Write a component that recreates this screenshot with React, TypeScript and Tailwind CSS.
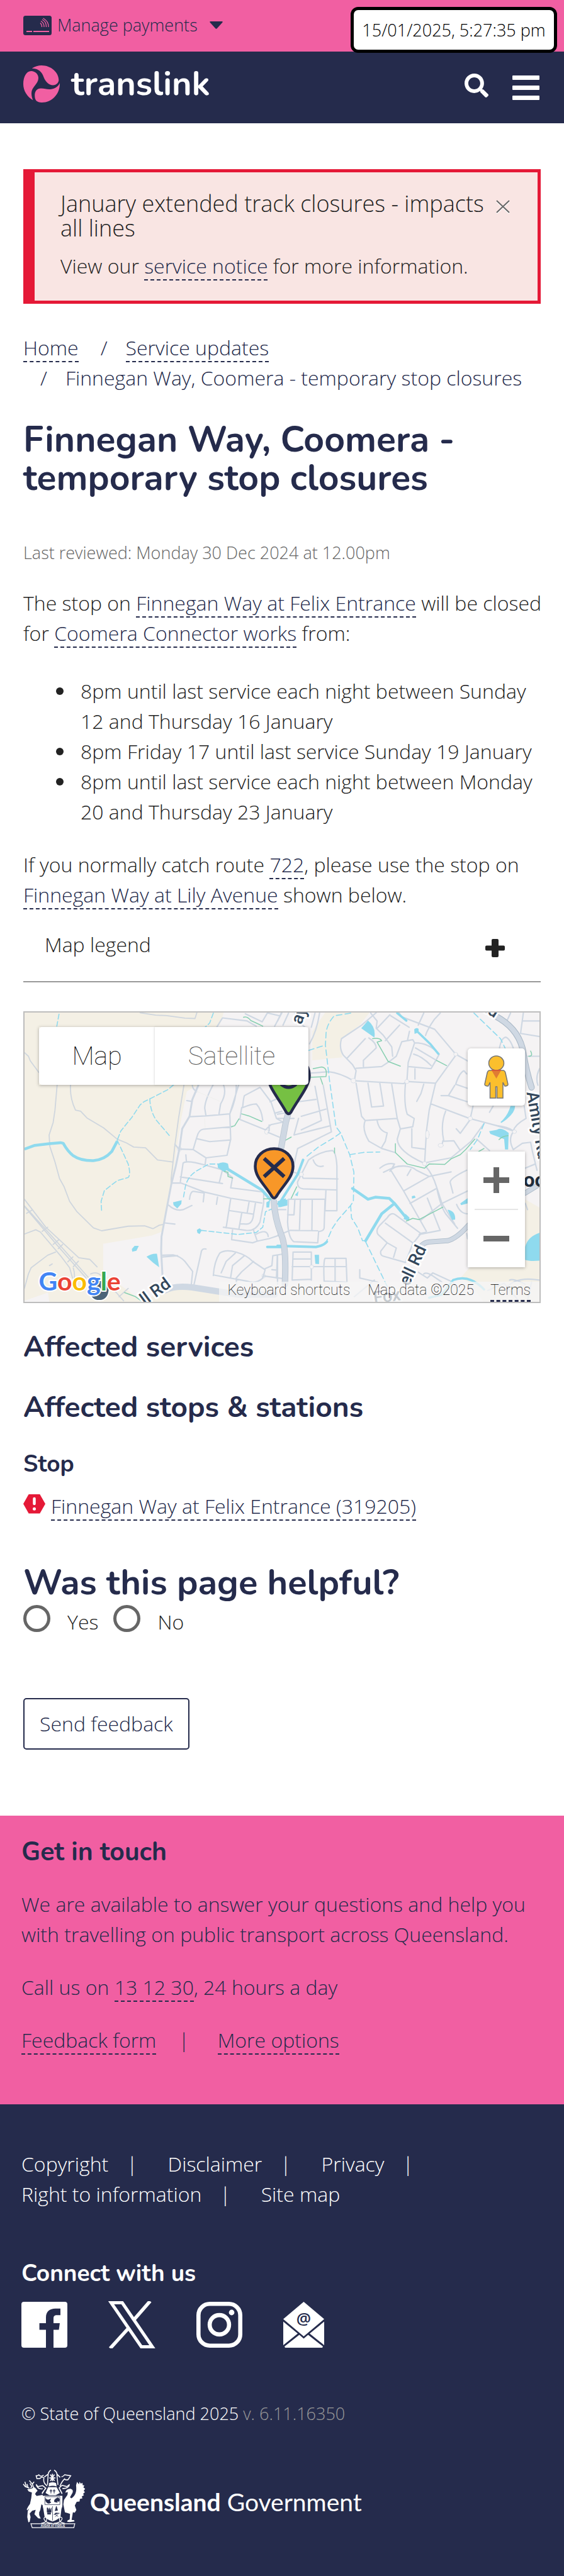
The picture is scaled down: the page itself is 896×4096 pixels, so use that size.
import type { ReactNode } from 'react';
import { FaSearch } from 'react-icons/fa';

const HEADING = "font-['Nunito','Lato',sans-serif] font-bold";

function TextLink({ children, href = '#' }: { children: ReactNode; href?: string }) {
  return (
    <a href={href} className="border-b-2 border-dashed border-[#252b4c] text-[#252b4c]">
      {children}
    </a>
  );
}

function PaymentCardIcon() {
  return (
    <svg width="45" height="31" viewBox="0 0 45 31" aria-hidden="true">
      <rect width="45" height="31" rx="3.5" fill="#252b4c" />
      <path d="M5 25h9M16 25h25" stroke="#f15fa2" strokeWidth="2" />
      <path
        d="M27 11.5q3 3 2.5 6.500M28 8.500q5.500 3.500 5 9.500M30 6q7 4 6.500 12M31.500 4q9 5 8.500 14"
        fill="none"
        stroke="#f15fa2"
        strokeWidth="1.300"
      />
    </svg>
  );
}

function TranslinkMark() {
  return (
    <svg width="59" height="59" viewBox="0 0 59 59" fill="#f15fa2" aria-hidden="true">
      <path d="M13.700 4.800C18 1.500 24 0 29 0 44 0 56 11 56.300 23c0 4-3.300 8.500-9.300 8.500S35.500 26 33 20C31 14 27 5 13.700 4.800z" />
      <path d="M12.500 9C19 9 24 14 24 20c0 10-11 14-11 24 0 5 1 8 2.400 11.300C6 50 0 40 0 29.500 0 18 5 9 12.500 9z" />
      <path d="M18.200 48C18 41 22 36.600 28 36.600c6 0 9 1.800 15 1.400 8-1 13-5 15-10 .5 18-13 31-28.500 31-8.500 0-11.200-4-11.300-11z" />
    </svg>
  );
}

function TopBar() {
  return (
    <div className="relative flex h-[82px] items-start bg-[#f15fa2] px-[37px] pt-[20px]">
      <button type="button" className="flex items-center text-[27px] leading-[40px] text-[#252b4c]">
        <PaymentCardIcon />
        <span className="ml-[9px]">Manage payments</span>
        <svg className="ml-[19px]" width="21" height="12" viewBox="0 0 21 12" aria-hidden="true">
          <path d="M1.500 0h18q2 0 .8 1.800l-8.600 9.400q-1.200 1.200-2.400 0L.7 1.800Q-.5 0 1.500 0z" fill="#252b4c" />
        </svg>
      </button>
      <time className="absolute top-[11px] right-[11px] z-10 flex h-[73px] w-[328px] items-center justify-center rounded-[12px] border-5 border-black bg-white text-[27px] leading-[40px] whitespace-nowrap text-black">
        15/01/2025, 5:27:35 pm
      </time>
    </div>
  );
}

function NavBar() {
  return (
    <header className="flex h-[114px] items-start justify-between bg-[#252b4c] pt-[22px] pr-[39px] pl-[37px]">
      <a href="#" className="flex items-center gap-[17px] text-white">
        <TranslinkMark />
        <span className="font-['Nunito','Lato',sans-serif] text-[54px] leading-[59px] font-bold">translink</span>
      </a>
      <div className="flex items-start gap-[38px] pt-[13px] text-white">
        <button type="button" aria-label="Search">
          <FaSearch size={38} />
        </button>
        <button type="button" aria-label="Menu" className="flex flex-col gap-[9px] pt-[3px]">
          <span className="h-[7px] w-[43px] rounded-[1px] bg-white" />
          <span className="h-[7px] w-[43px] rounded-[1px] bg-white" />
          <span className="h-[7px] w-[43px] rounded-[1px] bg-white" />
        </button>
      </div>
    </header>
  );
}

function Alert() {
  return (
    <section className="mt-[73px] border-5 border-l-[18px] border-[#e51937] bg-[#f9e5e3] pt-[30px] pr-[44px] pb-[31px] pl-[41px]">
      <div className="flex items-start">
        <h2 className="grow text-[36px] leading-[39px]">January extended track closures - impacts all lines</h2>
        <button type="button" aria-label="Dismiss" className="mt-[14px] shrink-0">
          <svg width="22" height="22" viewBox="0 0 22 22" aria-hidden="true">
            <path d="M1 2.500l20 19M21 2.500l-20 19" stroke="#fff" strokeWidth="2" />
            <path d="M1 1l20 19M21 1l-20 19" stroke="#666" strokeWidth="2" />
          </svg>
        </button>
      </div>
      <p className="mt-[17px]">
        View our <TextLink>service notice</TextLink> for more information.
      </p>
    </section>
  );
}

function Breadcrumb() {
  return (
    <nav aria-label="Breadcrumb" className="mt-[46px] text-[#252b4c]">
      <ol className="flex flex-wrap">
        <li>
          <TextLink>Home</TextLink>
        </li>
        <li className="pl-[35px]">
          <span className="pr-[29px]">/</span>
          <TextLink>Service updates</TextLink>
        </li>
        <li className="pl-[27px]">
          <span className="pr-[29px]">/</span>
          Finnegan Way, Coomera - temporary stop closures
        </li>
      </ol>
    </nav>
  );
}

const ROAD = '#cfd8e3';
const WATER = '#8fdaee';
const PATH_GREEN = '#86cfb0';

function MapCanvas() {
  return (
    <svg
      className="absolute inset-0 h-full w-full [&_path]:[vector-effect:non-scaling-stroke]"
      viewBox="0 0 819 460"
      preserveAspectRatio="xMidYMid slice"
      aria-hidden="true"
    >
      <rect width="819" height="460" fill="#f5f3f4" />
      <g transform="translate(-38.400 -29.400) scale(.2908 .3296)" fill="none" strokeLinejoin="round" strokeLinecap="round">
        <path
          fill="#f4f0e5"
          d="M130 80H1225L1200 150 1180 160 1080 440 1020 470 990 600 940 900 890 1145 830 1165 563 1205 563 1350 700 1430 780 1490H270L262 1440 133 1480z"
        />
        <path fill="#f4f0e5" d="M800 1490L880 1405 1220 1440 1260 1490z" />
        <g stroke="#cfd6de" strokeWidth="1.800">
          <path d="M133 282L155 300 165 322 212 378M312 436L300 560 290 620 268 680 272 735 300 810 325 890 350 930 380 1000 420 1050 510 1128 555 1142 700 1120 790 1118 835 1132 870 1115 890 1112M385 436Q380 500 412 560L440 565 475 598 565 645 640 700 690 718 730 738 795 742 860 800 942 810M1005 436L975 600 955 730 935 890 935 920M765 90L850 102 910 104 1010 116 1065 118 1075 90M133 990L250 1125 330 1190 430 1272 490 1280 530 1316" />
          <path d="M133 1022L300 1185 480 1365 530 1410M138 1030L310 1210 470 1370M145 1058l30-16M230 1145l30-20M290 1208l30-22M318 1228l24-20M370 1292l28-24M400 1315l28-26M270 1310l15-8" />
          <path d="M133 1158L195 1137 220 1148 330 1262 380 1320 396 1370M303 1245L260 1260 170 1320 155 1350 133 1420M400 1322q10 30 5 50M495 1350q50-20 80 40l60 50 40 40M700 1420l-50 40" />
        </g>
        <g stroke={ROAD} strokeWidth="2.200">
          <path d="M1185 158L1215 115 1350 130 1400 155M1340 95L1432 134 1460 92M1465 92L1528 105M1540 90L1500 155" />
          <path d="M1085 436L1050 510 1035 590 995 650 980 745 960 830 935 920 905 1060 882 1170 880 1240 890 1400" strokeWidth="3" />
          <path d="M1020 514L1048 518M1050 436Q1050 460 1075 470M1035 592L1125 588 1255 578 1310 420M1165 436Q1120 510 1118 550L1125 588M1220 436Q1240 480 1205 530L1196 578M1290 436Q1295 500 1255 578L1260 700 1240 778 1125 790 1055 750 1075 690Q1085 655 1110 652L1265 640M1075 698L1145 712 1260 704M980 748L1055 750M955 725L975 745M1125 790L1120 822M1015 776L1018 808M985 905L1000 815Q1020 800 1120 825L1215 848 1198 908M985 882L1215 914M942 912L990 912 1115 955 1260 985 1430 1008M1035 990Q1040 950 1058 952L1115 960 1110 1002M1188 980L1182 1014M1218 850L1270 885 1260 935 1440 955 1440 1008 1420 1100Q1395 1145 1345 1140L1220 1125M1260 988L1235 1128M1255 1045L1385 1062M1360 1005L1350 1055M1395 1010L1385 1062Q1380 1110 1345 1110L1312 1108M1320 1058L1305 1132M1270 1138L1265 1185 1380 1200 1405 1192 1470 1180 1530 1162M1385 1140L1405 1192M1400 1158Q1460 1130 1465 1170M920 1018Q960 1050 1000 1040L1048 1020M898 1104L955 1110" />
          <path d="M888 1260L945 1258Q985 1265 1010 1290L1052 1338 1045 1400M1125 1230Q1100 1225 1098 1250L1075 1340 1060 1400M888 1268L970 1262M1165 1358Q1170 1290 1200 1250Q1230 1230 1290 1245Q1350 1260 1380 1290L1448 1330 1435 1370Q1400 1400 1350 1385L1165 1355M1285 1250L1235 1290 1208 1345M1335 1262L1270 1310 1260 1365M1385 1290L1320 1340 1290 1370 1292 1400M1448 1325L1485 1310 1490 1262 1540 1255M1485 1330L1515 1332M1440 1360L1540 1372M1515 1260L1510 1370" />
          <path d="M1325 548Q1330 500 1335 490L1420 450 1480 520 1510 600 1545 618M1325 548Q1370 530 1400 530Q1430 560 1435 610M1320 548L1310 605 1450 655 1480 630 1545 618M1475 520L1540 495M1500 575L1540 565M1465 668L1525 690M1470 660L1470 632" />
          <circle cx="980" cy="747" r="11" />
          <circle cx="1456" cy="665" r="11" />
          <circle cx="1440" cy="1360" r="10" />
        </g>
        <g stroke="#f0f0ee" strokeWidth="1.200">
          <path d="M1075 470L1200 517M1118 600L1120 645" />
        </g>
        <g stroke={WATER} strokeWidth="1.600" strokeDasharray="8 4">
          <path d="M322 97L310 155M1165 92L1145 140 1120 160M948 438L915 462 820 505 785 520 765 535 720 595 660 660 640 705M640 705L700 820Q715 870 700 885L640 900 570 948 552 1000 555 1050M818 505Q820 560 850 605L932 690M1215 820L1140 820 1080 850Q1020 880 1010 940L1000 990M1100 1140L1300 1160 1400 1150 1435 1125 1450 1050 1490 1035" />
        </g>
        <path d="M133 748L190 730 270 722 330 717 345 720Q370 760 400 780Q440 805 510 804Q570 800 610 760L640 710" stroke={WATER} strokeWidth="4.500" strokeLinecap="butt" />
        <path d="M1235 840L1430 945 1475 990" stroke={WATER} strokeWidth="4.500" />
        <path d="M1460 1220H1540" stroke={WATER} strokeWidth="4" />
        <g fill={WATER}>
          <path d="M1188 820Q1215 805 1245 818L1250 840 1225 858 1190 838zM945 1005L992 995 990 1012 968 1034 948 1018zM1075 1138L1090 1130 1102 1140 1090 1158 1078 1152zM720 1230L735 1215 758 1215 745 1238 722 1243zM800 1267Q830 1250 857 1253L869 1318 835 1295zM1455 1005l20-10-5 35-15 0zM1510 1010l60-20v30l-40 8z" />
        </g>
        <path d="M1320 578L1360 588 1430 615M1305 602L1282 635 1265 640M1225 855l20 5v20l25 8M1440 988h40M1330 112Q1350 105 1370 128L1400 140 1435 155M680 1440L740 1460 775 1482" stroke={PATH_GREEN} strokeWidth="1.500" />
        <path d="M900 1430Q950 1405 1050 1415L1300 1450 1500 1450" stroke={ROAD} strokeWidth="10" />
      </g>
      <g transform="translate(402.400 -29.400) scale(.2903 .3296)" fill="none" strokeLinejoin="round" strokeLinecap="round">
        <path fill="#f4f0e5" d="M262 88H505L450 150 350 215 345 270 355 305 190 320 190 180zM1355 990L1434 1030V1490H1130L1050 1390 1000 1370 1060 1310 1355 1318z" />
        <g stroke={ROAD} strokeWidth="2.200">
          <path d="M540 90L460 150 350 215Q335 260 360 295L410 340 430 370 420 420M510 92L545 130 540 165 580 200 625 255 630 300M615 100L545 165M620 105L720 160M668 150L590 225M665 90L680 110 860 170 975 290 1045 325M890 92L860 120Q820 170 810 200M800 92L770 150M480 215L380 310M500 212Q540 235 540 260L470 320V350M430 358L570 350 620 320 650 300 680 230 740 220 750 235 715 330 708 420M722 180L712 220M750 235Q830 235 885 290L860 330 840 360 715 350M755 260L870 320M745 290Q790 300 840 345M752 360V410" />
          <path d="M170 382L280 375Q340 380 415 418L690 432 708 422 865 430 980 290M430 430L460 590 480 610 655 600 625 435M495 430L515 545 580 540 560 430M480 610Q460 650 500 710L570 745 645 765M545 610Q555 660 600 670L590 710 570 740M655 600L672 650 655 700Q660 760 800 815L950 790 1060 710 1130 625M700 430Q690 530 710 580L748 600 740 640 675 650M735 650V740L805 748M865 430L830 560 815 660 805 815M800 435L785 480 762 518M840 530L1050 600 1200 635 1290 660M920 565Q890 630 910 710L965 708 1000 755M905 708l-5 20M978 650L1000 672 1055 605M975 435L1040 455M970 440L935 490 1040 520M975 435Q995 380 1020 370L1035 385M895 490l45 0" />
          <path d="M1215 260Q1225 210 1250 208Q1280 220 1300 290M1345 92L1330 190 1434 205M1340 130H1434M1255 130L1275 92M1370 300H1434M1434 360Q1410 400 1425 440M1200 635Q1260 640 1290 660Q1300 630 1360 600L1350 540M1290 665Q1260 700 1290 750L1340 720 1385 715 1395 760 1420 850M1160 755L1090 700M1300 860L1410 820M1070 540L1055 600M1160 570L1180 540" />
          <path d="M560 840Q600 810 640 820L620 850 690 950 815 1145M580 860L640 835Q720 820 760 850L830 880 950 858M615 855Q640 825 700 830M810 830Q850 870 870 930L900 1010 970 1110M690 950L830 880M725 1010L865 940M785 1090L900 1010 1040 950M730 845L710 875M1035 850Q940 890 945 910L960 960M980 1015Q1000 1060 1040 1060M870 930Q890 1020 920 1060L985 1130M775 1160L890 1140 820 985M780 1155L810 1150" />
          <path d="M600 1080Q620 1050 645 1065L785 1155 740 1205 700 1295 580 1265Q560 1260 565 1240L600 1200 550 1160Q535 1140 560 1115zM590 1105L740 1200M600 1200L650 1225 635 1270M730 1320L820 1370 850 1345 960 1390 985 1430M800 1350Q815 1340 850 1360L900 1390M450 1330V1370L550 1390M530 1380L420 1460" />
          <path d="M60 990H260L255 1130Q250 1145 225 1145L220 1200 90 1195Q60 1180 55 1100zM125 995L120 1135M190 995L188 1140M55 1065H90L95 990M0 1165L70 1140 220 1142M265 945L260 1045H325V830Q320 760 300 755Q230 760 170 800L110 905Q105 935 140 940L325 945M130 870L140 888 330 892M195 800Q210 840 250 830M90 860L125 870" />
          <path d="M90 1245H185V1380M85 1245L80 1380 185 1376M85 1278H185M80 1315H375M260 1275Q250 1290 255 1385L380 1390 375 1275zM315 1275V1385M0 1260V1400M0 1040H45" />
          <path d="M130 590L265 555M115 600L90 680 290 635M110 520L210 508M205 445L240 610 130 655M250 440L295 665 110 745 75 880M90 600L0 600M150 160L100 120 95 92M60 92L30 150M230 92Q215 180 175 240M205 92L185 160M0 130L20 92M0 580L60 570" />
          <path d="M1355 1400Q1290 1370 1270 1380M1250 1420Q1300 1360 1434 1380M1150 1430L1240 1395 1320 1480M1390 1390L1370 1470M1040 1180l-5-25M1368 1040l-12-30" />
        </g>
        <g fill="#f5f3f4" stroke={ROAD} strokeWidth="2.200">
          <ellipse cx="415" cy="418" rx="13" ry="11" />
          <ellipse cx="708" cy="422" rx="12" ry="10" />
          <ellipse cx="975" cy="290" rx="11" ry="9" />
          <ellipse cx="1055" cy="600" rx="12" ry="10" />
          <ellipse cx="1297" cy="664" rx="11" ry="9" />
          <ellipse cx="805" cy="818" rx="12" ry="10" />
          <ellipse cx="893" cy="730" rx="14" ry="9" />
          <ellipse cx="130" cy="870" rx="12" ry="10" />
          <ellipse cx="187" cy="1316" rx="11" ry="9" />
          <ellipse cx="820" cy="678" rx="10" ry="20" />
        </g>
        <g stroke={WATER} strokeWidth="1.600" strokeDasharray="9 5">
          <path d="M170 272L262 246M400 92L310 105Q265 150 265 200L262 246 285 420 320 640 345 670 395 775 418 860 415 1000 400 1020 330 1090 300 1130 265 1200M400 1020L405 1080 440 1130 465 1190 482 1190M482 1195L600 1410M345 670L310 692 220 740 150 790M395 775L470 764 560 762M1075 92L1220 215 1245 260M1130 625L1095 700 1055 750" />
        </g>
        <g stroke={WATER}>
          <path d="M410 938L495 990 535 980 612 986 640 1010 705 1080M640 1010L570 1060 482 1190" strokeWidth="4.500" />
          <path d="M0 1215L210 1220Q250 1215 270 1195M10 1010L110 870 140 800" strokeWidth="4" />
          <path d="M655 92L705 128M770 185L835 240 880 288" strokeWidth="3.500" />
          <path d="M830 1465L900 1450 960 1380Q1050 1350 1130 1425" strokeWidth="3.500" />
        </g>
        <g fill={WATER}>
          <path d="M458 165L495 128Q540 160 530 210zM748 170Q760 160 772 168V185L750 192zM203 1258h24v45l-20-2zM700 1060L722 1078 720 1095 690 1085zM0 1000l45-15 0 30-40 15zM735 975l15-3 6 10-20 5zM1000 1010L1040 985V1010L1005 1018zM930 1040Q975 1045 972 1088L955 1090zM1158 662L1200 655Q1225 640 1265 670L1262 750H1245L1240 700 1165 675zM1275 540H1300Q1300 580 1225 622L1220 618Q1262 585 1275 540zM1434 1152Q1370 1170 1355 1220V1282Q1380 1290 1434 1286zM95 970l20-20-5 25z" />
        </g>
        <g stroke={PATH_GREEN} strokeWidth="1.500">
          <path d="M520 215Q560 210 570 225L545 232 605 325 672 348M195 360L240 352Q275 355 265 398L170 402M235 405L247 435M645 722V765L710 820 805 840 830 820 915 822 950 795 1000 775 1030 750 1080 700M705 1095L740 1082 775 1088 905 1028M1212 702Q1230 685 1262 683M870 320l55 25M45 705L75 690M105 930L75 985M1375 300Q1400 300 1385 275M1100 760L1130 745M312 742v25" />
        </g>
        <path d="M1190 105Q1310 160 1340 260Q1360 370 1390 450" stroke="#a9b8c6" strokeWidth="10" />
        <path d="M1190 105Q1310 160 1340 260Q1360 370 1390 450" stroke={ROAD} strokeWidth="8" />
        <path d="M760 1260Q780 1200 830 1196L930 1190Q980 1180 1045 1115M1355 960L1420 925" stroke="#a9b8c6" strokeWidth="8" />
        <path d="M760 1260Q780 1200 830 1196L930 1190Q980 1180 1045 1115M1355 960L1420 925" stroke={ROAD} strokeWidth="6.500" />
        <path d="M60 570L45 620 20 740M-20 1000Q-15 1080 20 1160Q50 1220 40 1400" stroke="#b7c3cf" strokeWidth="10" />
        <path d="M60 570L45 620 20 740M-20 1000Q-15 1080 20 1160Q50 1220 40 1400" stroke={ROAD} strokeWidth="8.500" />
      </g>
      <g className="font-['Roboto',sans-serif] text-[27px] font-medium" fill="#33475b" stroke="#fff" strokeWidth="6" strokeLinejoin="round" paintOrder="stroke">
        <text transform="translate(440 20) rotate(-68)">ay</text>
        <text transform="translate(720 -8) rotate(32)">Rd</text>
        <text transform="translate(798 127) rotate(80)">Amity Rd</text>
        <text transform="translate(611 436) rotate(-65)">ell Rd</text>
        <text transform="translate(556 463) rotate(-8)">Fox</text>
        <text transform="translate(192 466) rotate(-36)">ll Rd</text>
      </g>
      <text x="793" y="277" className="font-['Roboto',sans-serif] text-[32px] font-bold" fill="#1f2c3a">
        oo
      </text>
      <path d="M403 0c20 0 33 14 33 31 0 18-17 36-29 58q-4 6-8 0C387 67 370 49 370 31 370 14 383 0 403 0z" transform="translate(17 69)" fill="#76c043" stroke="#252b4c" strokeWidth="4.500" />
      <path d="M408 114q12 10 24 0" fill="none" stroke="#252b4c" strokeWidth="5" />
      <path d="M397 216.500c-17 0-30 12-30 28 0 18 16 30 26.500 48q3.500 5 7 0C411 274.500 427 262.500 427 244.500c0-16-13-28-30-28z" fill="#f89728" stroke="#252b4c" strokeWidth="4.500" />
      <path d="M381 232l32 29M413 232l-32 29" stroke="#252b4c" strokeWidth="6" />
      <path d="M103 426h32v16q-2 16-16 16t-16-16z" fill="#4c6478" stroke="#fff" strokeWidth="2" />
      <text
        x="23"
        y="442"
        className="font-['Lato',sans-serif] text-[41px] font-bold"
        stroke="#fff"
        strokeWidth="4"
        strokeLinejoin="round"
        paintOrder="stroke"
      >
        <tspan fill="#4285f4">G</tspan>
        <tspan fill="#ea4335">o</tspan>
        <tspan fill="#fbbc05">o</tspan>
        <tspan fill="#4285f4">g</tspan>
        <tspan fill="#34a853">l</tspan>
        <tspan fill="#ea4335">e</tspan>
      </text>
    </svg>
  );
}

function Pegman() {
  return (
    <svg width="39" height="69" viewBox="0 0 39 69" aria-hidden="true">
      <path
        d="M9 24h21q3 0 4 4l4 18q0 3-5 3l-3-6v25h-9.500V50h-2v18H9.500V43l-3 6Q1 49 1 46l4-18q1-4 4-4z"
        fill="#fbbf2d"
        stroke="#757575"
        strokeWidth="1.500"
      />
      <ellipse cx="19.500" cy="12.500" rx="12" ry="11.500" fill="#fbbf2d" stroke="#757575" strokeWidth="1.500" />
      <path d="M12 24h15l-7.500 13z" fill="#e07c33" />
      <path d="M12 24h15" stroke="#e04f2f" strokeWidth="1.500" />
    </svg>
  );
}

function StopMap() {
  return (
    <section aria-label="Stop map" className="relative mt-[46px] h-[464px] overflow-hidden border-2 border-[#bdbdbd] font-['Roboto',sans-serif] font-thin">
      <MapCanvas />
      <div className="absolute top-[23px] left-[23px] flex h-[92px] text-[41px] leading-[92px] shadow-[0_1px_5px_rgba(0,0,0,0.3)]">
        <button type="button" className="w-[184px] rounded-l-[5px] bg-white text-black">
          Map
        </button>
        <button type="button" className="w-[244px] rounded-r-[5px] bg-white text-[#565656] shadow-[-1px_0_3px_rgba(0,0,0,0.12)]">
          Satellite
        </button>
      </div>
      <button type="button" aria-label="Street View" className="absolute top-[57px] right-[23px] flex h-[91px] w-[91px] items-center justify-center rounded-[5px] bg-white shadow-[0_1px_5px_rgba(0,0,0,0.3)]">
        <Pegman />
      </button>
      <div className="absolute top-[221px] right-[23px] flex h-[184px] w-[91px] flex-col items-center bg-white shadow-[0_1px_5px_rgba(0,0,0,0.3)]">
        <button type="button" aria-label="Zoom in" className="flex h-[91px] w-full items-center justify-center">
          <svg width="41" height="41" viewBox="0 0 41 41" aria-hidden="true">
            <path d="M0 20.500h41M20.500 0v41" stroke="#666" strokeWidth="9" />
          </svg>
        </button>
        <div className="h-[2px] w-[69px] bg-[#e6e6e6]" />
        <button type="button" aria-label="Zoom out" className="flex h-[91px] w-full items-center justify-center">
          <svg width="41" height="9" viewBox="0 0 41 9" aria-hidden="true">
            <path d="M0 4.500h41" stroke="#666" strokeWidth="9" />
          </svg>
        </button>
      </div>
      <div className="absolute right-0 bottom-0 flex h-[32px] bg-[#f5f5f5]/75 pr-[14px] pl-[13px] text-[23px] leading-[28px] text-black">
        <button type="button" className="h-[28px]">
          Keyboard shortcuts
        </button>
        <span className="ml-[28px]">Map data ©2025</span>
        <a href="#" className="ml-[26px] h-[32px] border-b-3 border-dashed border-[#252b4c]">
          Terms
        </a>
      </div>
    </section>
  );
}

function Article() {
  return (
    <article>
      <h1 className={`${HEADING} mt-[44px] max-w-[780px] text-[57px] leading-[61px] text-[#252b4c]`}>
        Finnegan Way, Coomera - temporary stop closures
      </h1>
      <p className="mt-[68px] text-[27px] leading-[40px] text-[#666]">Last reviewed: Monday 30 Dec 2024 at 12.00pm</p>
      <p className="-mr-2 mt-[36px]">
        The stop on <TextLink>Finnegan Way at Felix Entrance</TextLink> will be closed for{' '}
        <TextLink>Coomera Connector works</TextLink> from:
      </p>
      <ul className="mt-[44px]">
        {[
          '8pm until last service each night between Sunday 12 and Thursday 16 January',
          '8pm Friday 17 until last service Sunday 19 January',
          '8pm until last service each night between Monday 20 and Thursday 23 January',
        ].map((item) => (
          <li key={item} className="flex items-start pl-[52px]">
            <span className="mt-[18px] mr-[27px] h-[12px] w-[12px] shrink-0 rounded-full bg-[#222]" />
            {item}
          </li>
        ))}
      </ul>
      <p className="mt-[36px]">
        If you normally catch route <TextLink>722</TextLink>, please use the stop on{' '}
        <TextLink>Finnegan Way at Lily Avenue</TextLink> shown below.
      </p>
      <button type="button" aria-expanded="false" className="flex w-full items-center justify-between border-b-2 border-[#999] pt-[31px] pr-[57px] pb-[34px] pl-[34px]">
        <span>Map legend</span>
        <svg className="mt-[10px]" width="31" height="29" viewBox="0 0 31 29" aria-hidden="true">
          <path d="M2 10.500h8V2q0-2 2-2h7q2 0 2 2v8.500h8q2 0 2 2v4q0 2-2 2h-8V27q0 2-2 2h-7q-2 0-2-2v-8.500H2q-2 0-2-2v-4q0-2 2-2z" fill="#222" />
        </svg>
      </button>
      <StopMap />
      <h2 className={`${HEADING} mt-[43px] text-[46px] leading-[54px] text-[#252b4c]`}>Affected services</h2>
      <h2 className={`${HEADING} mt-[42px] text-[46px] leading-[54px] text-[#252b4c]`}>Affected stops &amp; stations</h2>
      <h3 className={`${HEADING} mt-[41px] text-[37px] leading-[44px] text-[#252b4c]`}>Stop</h3>
      <div className="mt-[21px] flex items-start gap-[9px]">
        <svg className="mt-[5px]" width="35" height="31" viewBox="0 0 35 31" aria-hidden="true">
          <path d="M8.600 0h17.700L35 15.300l-8.700 15.300H8.600L0 15.300z" fill="#e51937" />
          <path d="M17.500 7v8" stroke="#fff" strokeWidth="4.500" strokeLinecap="round" />
          <circle cx="17.500" cy="23.300" r="2.500" fill="#fff" />
        </svg>
        <p>
          <TextLink>Finnegan Way at Felix Entrance (319205)</TextLink>
        </p>
      </div>
    </article>
  );
}

function Feedback() {
  return (
    <form className="pt-[67px] pb-[105px]">
      <fieldset>
        <legend className={`${HEADING} text-[56px] leading-[61px] text-[#252b4c]`}>Was this page helpful?</legend>
        <div className="flex items-start pt-[5px]">
          {['Yes', 'No'].map((answer) => (
            <label key={answer} className="mr-[24px] flex items-start">
              <input type="radio" name="helpful" value={answer} className="h-[43px] w-[43px] appearance-none rounded-full border-5 border-[#666] bg-white checked:bg-[#252b4c]" />
              <span className="ml-[27px] pt-[3px]">{answer}</span>
            </label>
          ))}
        </div>
      </fieldset>
      <button type="button" className="mt-[97px] h-[82px] rounded-[5px] border-2 border-[#252b4c] px-[24px] text-[#252b4c]">
        Send feedback
      </button>
    </form>
  );
}

function GetInTouch() {
  return (
    <section className="bg-[#f15fa2] px-[34px] pt-[33px] pb-[78px] text-[#252b4c]">
      <h2 className={`${HEADING} text-[41px] leading-[50px]`}>Get in touch</h2>
      <p className="mt-[34px]">
        We are available to answer your questions and help you with travelling on public transport across Queensland.
      </p>
      <p className="mt-[36px]">
        Call us on <TextLink>13 12 30</TextLink>, 24 hours a day
      </p>
      <p className="mt-[36px] flex">
        <span>
          <TextLink>Feedback form</TextLink>
        </span>
        <span className="pr-[45px] pl-[35px]">|</span>
        <span>
          <TextLink>More options</TextLink>
        </span>
      </p>
    </section>
  );
}

function QueenslandCrest() {
  return (
    <svg width="100" height="93" viewBox="24 32 396 368" fill="#fff" aria-hidden="true">
      <path d="M53 155L82 151 94 140Q112 152 118 165L108 174 102 185 112 197 150 190 156 260 142 250 135 285 128 300 128 318 138 340 122 338 98 312 106 284 84 290 68 308 74 330 68 360 60 364 53 330 56 292 66 275 52 288 50 280 60 262 70 248 78 210 82 175 62 168z" />
      <path d="M92 142L85 122 66 100M85 122L96 108M66 148L40 138 28 122M48 141L38 108M58 145L52 122M74 148L82 138 70 118" fill="none" stroke="#fff" strokeWidth="6" />
      <path d="M292 176Q298 152 325 152Q345 158 338 176L322 205 330 212Q368 190 360 130L366 108 378 124 382 108 390 120 400 114 402 130 412 130 406 144 417 152 408 166 416 172 404 184 410 192 396 200 400 212 384 216 382 232 364 234 352 258 362 285 352 302 340 300 332 348 348 350 350 358 320 362 304 360 306 352 320 345 322 310 308 305 290 300 280 250 284 222 306 190 308 172z" />
      <path d="M150 196h124v60q0 12-6 22l-6 50q-20 22-50 30-30-8-50-30l-8-50q-4-10-4-22z" />
      <path d="M164 202h94v50h-94zM212 262v90" fill="none" stroke="#252b4c" strokeWidth="3" />
      <path d="M168 212q-2 30 22 32l12-6-8-8 6-14-14 6q-10 2-18-10zM246 208q16 8 6 24l-12-4 2 10-18-4q-4-18 22-26zM178 272h4l4 20 6-20 6 20 6-20v28h-26zM180 304h20v8h-20zM236 262l8 26-16 2zM228 312l20 16M248 312l-20 16M220 316l12-12 24 2" stroke="#252b4c" strokeWidth="3" fill="#252b4c" />
      <path d="M184 142h54l20 36-26 14h-40l-24-14z" />
      <path d="M202 155v26M194 165h16M222 155v26M214 165h16" stroke="#252b4c" strokeWidth="4" />
      <path d="M190 116q22-10 44 0l4 22q-24-10-50 0z" />
      <path d="M198 62l26 40M224 62l-26 40M192 84h38M211 58v46" stroke="#fff" strokeWidth="7" />
      <path
        d="M202 34q-18 10-18 34l-4 60M222 34q20 12 18 34l6 60M184 60l-24 18M240 60l20 20M156 66q-20 14-30-2-12 10-18 4l6 20q20 2 24-6 12-8 20 2-8 30 20 50M268 76q10 0 20-12l38 6-16 24q-14 6-22-4-16 14-30 46M108 124l12 14 30-6 20 16-24 30M320 124l-18 14-30-8-18 16 18 36M110 128q8 28 40 24M318 130q-10 22-44 20M146 184l24-40M272 184l-20-40"
        fill="none"
        stroke="#fff"
        strokeWidth="6"
      />
      <path d="M76 372h276l-6 25H84zM140 370q34-6 34-20 4-24-12-18-12 10 10 28 16 10 40 10M290 370q-34-6-34-20-4-24 12-18 12 10-10 28-16 10-40 10" fill="none" stroke="#fff" strokeWidth="5" />
      <text x="214" y="391" textAnchor="middle" className="font-['Open_Sans',sans-serif] text-[17px] font-bold">
        AUDAX AT FIDELIS
      </text>
    </svg>
  );
}

function SocialLinks() {
  return (
    <ul className="mt-[22px] flex items-center gap-[65px]">
      <li>
        <a href="#" aria-label="Facebook">
          <svg width="73" height="73" viewBox="0 0 73 73" aria-hidden="true">
            <rect width="73" height="73" rx="4" fill="#fff" />
            <path d="M39 73V44.600H28.600V34H39V25C39 15.500 45 10.800 54 10.800H62V21.300H56C52 21.300 51 23.500 51 27V34H61L59.500 44.600H51V73z" fill="#252b4c" />
          </svg>
        </a>
      </li>
      <li>
        <a href="#" aria-label="X">
          <svg width="75" height="75" viewBox="0 0 75 75" fill="none" stroke="#fff" strokeWidth="5" aria-hidden="true">
            <path d="M4.500 2.500h17.700L70 72.500H52.500z" />
            <path d="M66.500 0L39.500 31M33.500 41.500L3 75" strokeWidth="5.500" />
          </svg>
        </a>
      </li>
      <li>
        <a href="#" aria-label="Instagram">
          <svg width="73" height="73" viewBox="0 0 73 73" fill="none" stroke="#fff" strokeWidth="6.600" aria-hidden="true">
            <rect x="3.300" y="3.300" width="66.400" height="66.400" rx="18" />
            <circle cx="36.500" cy="36.500" r="15.400" />
            <circle cx="56" cy="17" r="4.400" fill="#fff" stroke="none" />
          </svg>
        </a>
      </li>
      <li>
        <a href="#" aria-label="Email newsletter">
          <svg width="65" height="73" viewBox="0 0 65 73" fill="#fff" aria-hidden="true">
            <path d="M32.500 0L65 27.500 32.500 55 0 27.500zM0 31.500L23 50.500 0 69zM65 31.500L42 50.500 65 69zM25.500 52.500L32.500 58.500 39.500 52.500 63 71 62 73H3L2 71z" />
            <text x="32.500" y="36" textAnchor="middle" fill="#252b4c" className="font-['Open_Sans',sans-serif] text-[26px] font-semibold">
              @
            </text>
          </svg>
        </a>
      </li>
    </ul>
  );
}

function Footer() {
  return (
    <footer className="bg-[#252b4c] px-[34px] pt-[71px] pb-[76px] text-white">
      <ul className="flex max-w-[680px] flex-wrap">
        {['Copyright', 'Disclaimer', 'Privacy', 'Right to information', 'Site map'].map((label, i, all) => (
          <li key={label} className="flex pr-[48px]">
            <a href="#">{label}</a>
            {i < all.length - 1 && <span className="pl-[29px]">|</span>}
          </li>
        ))}
      </ul>
      <h2 className={`${HEADING} mt-[80px] text-[37px] leading-[44px]`}>Connect with us</h2>
      <SocialLinks />
      <p className="mt-[84px] text-[27px] leading-[40px]">
        © State of Queensland 2025 <span className="text-[#999]">v. 6.11.16350</span>
      </p>
      <a href="#" className="mt-[69px] flex items-center gap-[7px] pl-[2px]">
        <QueenslandCrest />
        <span className="pt-[8px] font-['Lato',sans-serif] text-[39px] leading-[56px] font-normal whitespace-nowrap">
          <strong className="font-bold">Queensland</strong> Government
        </span>
      </a>
    </footer>
  );
}

export default function App() {
  return (
    <div className="bg-white font-['Open_Sans',sans-serif] text-[32px] leading-[48px] font-light text-[#222]">
      <TopBar />
      <NavBar />
      <main className="px-[37px]">
        <Alert />
        <Breadcrumb />
        <Article />
        <Feedback />
      </main>
      <GetInTouch />
      <Footer />
    </div>
  );
}
